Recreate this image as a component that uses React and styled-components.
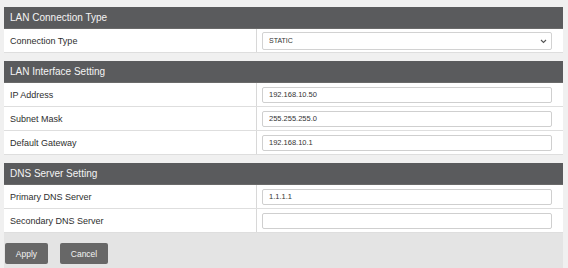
import React from "react";
import styled, { createGlobalStyle } from "styled-components";

const Global = createGlobalStyle`
  html, body { margin: 0; padding: 0; background: #f0f0f0; }
  body { font-family: "Liberation Sans", Arial, sans-serif; }
  * { box-sizing: border-box; }
`;

const Page = styled.div`
  width: 559px;
  margin: 7px 0 0 4px;
  display: flex;
  flex-direction: column;
  gap: 8px;
`;

const Section = styled.section`
  display: flex;
  flex-direction: column;
`;

const Header = styled.div`
  height: 22px;
  background: #5a5b5d;
  color: #f4f4f4;
  font-size: 10px;
  line-height: 22px;
  padding-left: 6px;
  border-bottom: 1px solid #6a6a6a;
`;

const Row = styled.div`
  display: grid;
  grid-template-columns: 253px 1fr;
  height: 24px;
  background: #fff;
  border-bottom: 1px solid #dedede;
`;

const Label = styled.div`
  display: flex;
  align-items: center;
  padding-left: 6px;
  font-size: 9px;
  color: #2e2e2e;
  border-right: 1px solid #d8d8d8;
`;

const Value = styled.div`
  display: flex;
  align-items: center;
  padding-left: 5px;
  padding-right: 11px;
`;

const Input = styled.input`
  width: 100%;
  height: 16px;
  border: 1px solid #cfcfcf;
  border-radius: 2px;
  padding: 0 6px;
  font-family: "Liberation Sans", Arial, sans-serif;
  font-size: 7.5px;
  color: #333;
  background: #fff;
  outline: none;
`;

const SelectBox = styled.div`
  position: relative;
  width: 100%;
  height: 18px;
  border: 1px solid #d2d2d2;
  border-radius: 2px;
  display: flex;
  align-items: center;
  padding: 0 6px;
  font-size: 7px;
  color: #333;
  background: #fff;
`;

const Chevron = styled.svg`
  position: absolute;
  right: 4px;
  top: 6px;
`;

const Footer = styled.div`
  height: 35px;
  background: #e4e4e4;
  display: flex;
  align-items: flex-start;
  gap: 12px;
  padding-left: 1px;
  padding-top: 10px;
  margin-top: -8px;
`;

const Button = styled.button`
  height: 21px;
  width: ${(p) => p.w}px;
  background: #676767;
  color: #f2f2f2;
  border: none;
  border-radius: 2px;
  font-family: "Liberation Sans", Arial, sans-serif;
  font-size: 8.5px;
  padding: 0;
`;

const Field = ({ label, value }) => (
  <Row>
    <Label>{label}</Label>
    <Value>
      <Input defaultValue={value} />
    </Value>
  </Row>
);

export default function App() {
  return (
    <>
      <Global />
      <Page>
        <Section>
          <Header>LAN Connection Type</Header>
          <Row>
            <Label>Connection Type</Label>
            <Value>
              <SelectBox>
                STATIC
                <Chevron width="7" height="5" viewBox="0 0 7 5">
                  <path d="M1 1l2.5 2.5L6 1" fill="none" stroke="#555" strokeWidth="1.1" />
                </Chevron>
              </SelectBox>
            </Value>
          </Row>
        </Section>
        <Section>
          <Header>LAN Interface Setting</Header>
          <Field label="IP Address" value="192.168.10.50" />
          <Field label="Subnet Mask" value="255.255.255.0" />
          <Field label="Default Gateway" value="192.168.10.1" />
        </Section>
        <Section>
          <Header>DNS Server Setting</Header>
          <Field label="Primary DNS Server" value="1.1.1.1" />
          <Field label="Secondary DNS Server" value="" />
        </Section>
        <Footer>
          <Button w={43}>Apply</Button>
          <Button w={48}>Cancel</Button>
        </Footer>
      </Page>
    </>
  );
}
